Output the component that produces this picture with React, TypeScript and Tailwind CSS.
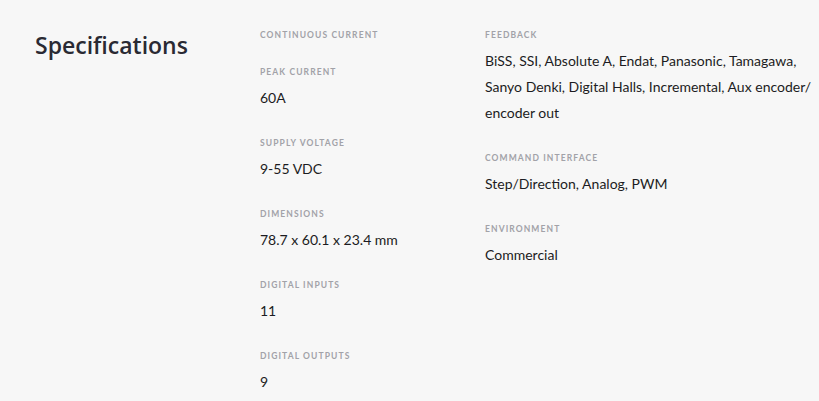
const col1 = [
  { label: "Continuous Current", value: "" },
  { label: "Peak Current", value: "60A" },
  { label: "Supply Voltage", value: "9-55 VDC" },
  { label: "Dimensions", value: "78.7 x 60.1 x 23.4 mm" },
  { label: "Digital Inputs", value: "11" },
  { label: "Digital Outputs", value: "9" },
];

const col2 = [
  {
    label: "Feedback",
    value:
      "BiSS, SSI, Absolute A, Endat, Panasonic, Tamagawa, Sanyo Denki, Digital Halls, Incremental, Aux encoder/ encoder out",
  },
  { label: "Command Interface", value: "Step/Direction, Analog, PWM" },
  { label: "Environment", value: "Commercial" },
];

function Spec({ label, value }: { label: string; value: string }) {
  return (
    <div className={value ? "" : "-mb-[3px]"}>
      <div className="text-[8.5px] leading-[16px] font-bold uppercase tracking-[1.1px] text-[#a2a2a8]">
        {label}
      </div>
      {value && (
        <div className="mt-[5px] text-[14px] leading-[26px] text-[#1c1c22]">
          {value}
        </div>
      )}
    </div>
  );
}

export default function App() {
  return (
    <div
      className="w-[819px] h-[401px] overflow-hidden bg-[#f7f7f7] flex pl-[35px] pt-[27px]"
      style={{ fontFamily: "Lato, 'Open Sans', sans-serif" }}
    >
      <h2 className="w-[225px] shrink-0 font-['Open_Sans',sans-serif] text-[23px] leading-[36px] font-semibold text-[#2a2a33]">
        Specifications
      </h2>
      <div className="w-[225px] shrink-0 flex flex-col gap-[24px]">
        {col1.map((s) => (
          <Spec key={s.label} {...s} />
        ))}
      </div>
      <div className="w-[330px] flex flex-col gap-[24px]">
        {col2.map((s) => (
          <Spec key={s.label} {...s} />
        ))}
      </div>
    </div>
  );
}
